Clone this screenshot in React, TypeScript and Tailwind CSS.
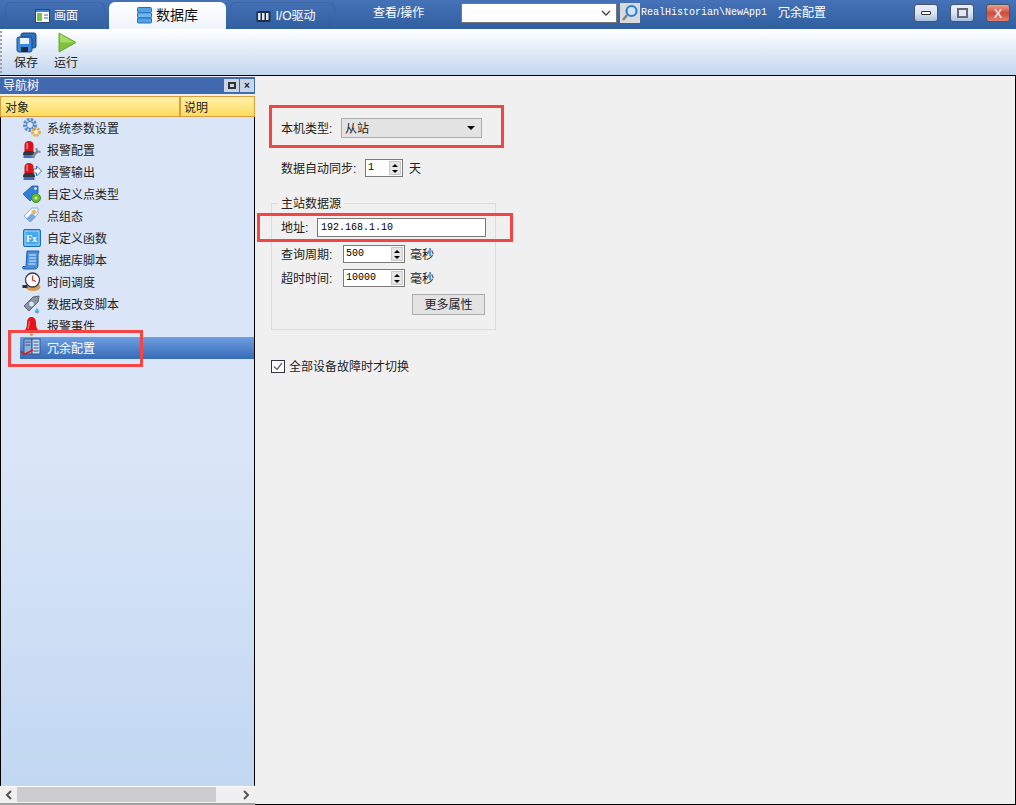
import type { ReactNode } from 'react'

const cjk = "font-['Liberation_Sans','Noto_Sans_CJK_SC',sans-serif]"
const mono = "font-['Liberation_Mono',monospace]"

function Svg({ size = 20, children }: { size?: number; children: ReactNode }) {
  return (
    <svg width={size} height={size} viewBox="0 0 20 20" className="shrink-0 overflow-visible">
      {children}
    </svg>
  )
}

/* tree icons */
const GearsIcon = () => (
  <Svg>
    <circle cx="8" cy="7" r="5.5" fill="none" stroke="#5b8fd0" strokeWidth="3" strokeDasharray="2.5 1.2" />
    <circle cx="8" cy="7" r="3.5" fill="none" stroke="#3f71b5" strokeWidth="1" />
    <circle cx="14" cy="14" r="3.6" fill="none" stroke="#e8a92c" strokeWidth="2.6" strokeDasharray="2 1" />
    <circle cx="14" cy="14" r="1.4" fill="#fff3c4" />
  </Svg>
)
const Siren = () => (
  <>
    <path d="M2.500 11V5C2.500 2.500 4.500 1 7 1s4.500 1.500 4.500 4V11Z" fill="#d8141c" />
    <rect x="4.500" y="3" width="1.500" height="6" fill="#f58a8a" />
    <path d="M1 15c0-2.500 1-4 2.500-4h7c1.500 0 2.500 1.500 2.500 4Z" fill="#33353f" />
    <rect x="1.500" y="15" width="11" height="3" fill="#3f6fc0" />
  </>
)
const AlarmConfigIcon = () => (
  <Svg>
    <Siren />
    <path d="M10 17l6-6" fill="none" stroke="#7f8898" strokeWidth="2.500" />
    <path d="M14.500 8a3 3 0 0 0 4 3.500" fill="none" stroke="#7f8898" strokeWidth="2" />
  </Svg>
)
const AlarmOutIcon = () => (
  <Svg>
    <Siren />
    <path d="M11.500 7h3V4l5 5-5 5v-3h-3Z" fill="#fff" stroke="#3c6fbb" strokeWidth="1" />
  </Svg>
)
const CustomTypeIcon = () => (
  <Svg>
    <path d="M1 10L10 2h6v7l-8 8Z" fill="#2f7fd6" stroke="#1e5aa8" strokeWidth="0.8" />
    <circle cx="13.500" cy="4.500" r="1.300" fill="#fff" />
    <circle cx="14" cy="14" r="4.500" fill="#6cb83a" stroke="#3f8a1e" strokeWidth="1" />
    <circle cx="14" cy="14" r="1.600" fill="#c9ec9f" />
  </Svg>
)
const PointGroupIcon = () => (
  <Svg>
    <path d="M2 10l8-8h6v6l-8 8Z" fill="#f4f7fc" stroke="#8eb0dc" strokeWidth="1" />
    <path d="M4 13l6-6 4 4-5 5Z" fill="#7aa7e0" />
    <path d="M9 6l3-3 3 3-3 3Z" fill="#e6b974" />
  </Svg>
)
const FxIcon = () => (
  <svg width="18" height="18" viewBox="0 0 18 18" className="shrink-0">
    <rect x="0.500" y="0.500" width="17" height="17" rx="1.500" fill="#3b9be8" stroke="#1a6fc0" />
    <rect x="2" y="2" width="14" height="14" fill="#48a8ee" stroke="#bfe2fb" strokeWidth="0.800" />
    <text x="3" y="13" fontSize="10" fontWeight="700" fill="#fff" fontFamily="Liberation Serif, serif">Fx</text>
  </svg>
)
const ScriptIcon = () => (
  <Svg>
    <path d="M5 1h12l-1 3v11c0 2-1 4-3 4H2c-1 0-2-1-1-2.500h3Z" fill="#4a90dc" stroke="#1f5fa8" strokeWidth="1" />
    <path d="M7 5h7M7 8h7M7 11h7M6.500 14h7" stroke="#e3f0fc" strokeWidth="1.200" />
  </Svg>
)
const ClockIcon = () => (
  <Svg>
    <ellipse cx="11" cy="15" rx="7.500" ry="4" fill="#d99a55" />
    <circle cx="10.500" cy="8" r="7" fill="#fff" stroke="#3d3d46" strokeWidth="1.300" />
    <path d="M10.500 3.500V8l3.500 1.500" fill="none" stroke="#c0392b" strokeWidth="1.200" />
    <rect x="0.500" y="13" width="5" height="3" fill="#24304a" />
  </Svg>
)
const TagScriptIcon = () => (
  <Svg>
    <path d="M2 12l9-9 6-1-1 6-9 9Z" fill="#8d95a3" stroke="#5a616d" strokeWidth="1" />
    <circle cx="9.500" cy="10" r="3" fill="#dfe5ee" stroke="#5f7796" strokeWidth="0.800" />
    <path d="M15 14c1.500 2 2 2.500 2 3.500a2 2 0 0 1-4 0c0-1 .5-1.500 2-3.500Z" fill="#5aa7ea" />
  </Svg>
)
const BellIcon = () => (
  <Svg>
    <path d="M9.500 1c3 0 4.500 2.500 4.500 6 0 4 1 6 3 8H2c2-2 3-4 3-8 0-3.500 1.500-6 4.500-6Z" fill="#e4141a" />
    <path d="M7.500 5c-.5 2-.5 5-1.500 8" stroke="#f78c8c" strokeWidth="1" fill="none" />
    <rect x="2" y="15" width="15" height="2" fill="#8c2a1f" />
    <circle cx="9.500" cy="18.500" r="1.500" fill="#c9a03c" />
  </Svg>
)
const RedundancyIcon = () => (
  <Svg>
    <rect x="2" y="1" width="8" height="15" fill="#8fb0dd" stroke="#33568c" strokeWidth="1" />
    <rect x="10" y="1" width="8" height="15" fill="#c7dbf3" stroke="#33568c" strokeWidth="1" />
    <path d="M3.500 4h5M3.500 7h5M11.500 4h5M11.500 7h5M11.500 10h5M11.500 13h5" stroke="#33568c" strokeWidth="1" />
    <path d="M-1 13l3 3.500L11 12" fill="none" stroke="#e01818" strokeWidth="1.800" />
  </Svg>
)

const treeItems = [
  { label: '系统参数设置', icon: <GearsIcon /> },
  { label: '报警配置', icon: <AlarmConfigIcon /> },
  { label: '报警输出', icon: <AlarmOutIcon /> },
  { label: '自定义点类型', icon: <CustomTypeIcon /> },
  { label: '点组态', icon: <PointGroupIcon /> },
  { label: '自定义函数', icon: <FxIcon /> },
  { label: '数据库脚本', icon: <ScriptIcon /> },
  { label: '时间调度', icon: <ClockIcon /> },
  { label: '数据改变脚本', icon: <TagScriptIcon /> },
  { label: '报警事件', icon: <BellIcon /> },
  { label: '冗余配置', icon: <RedundancyIcon />, selected: true },
]

function Tab({ label, icon, width, active }: { label: string; icon?: ReactNode; width: string; active?: boolean }) {
  return (
    <div
      className={`flex h-[27px] items-center justify-center gap-[4px] rounded-t-md ${width} ${
        active
          ? 'bg-linear-to-b from-white to-[#eef4fc] text-[14px] text-[#111]'
          : 'border-x border-t border-[#3a66a6] text-xs text-white'
      }`}
    >
      {icon}
      <span>{label}</span>
    </div>
  )
}

function WinButton({ close, children }: { close?: boolean; children: ReactNode }) {
  return (
    <div
      className={`flex h-[18px] w-6 items-center justify-center rounded-[3px] border border-[#4a5668] ${
        close
          ? 'bg-linear-to-b from-[#eea08e] via-[#d04a3a] to-[#e08070]'
          : 'bg-linear-to-b from-[#e6eef8] via-[#dbe6f4] to-[#a8c0de]'
      }`}
    >
      {children}
    </div>
  )
}

function Spin({ value, width }: { value: string; width: string }) {
  return (
    <div className={`flex h-[18px] items-center border border-[#7a7a7a] bg-white pl-[2px] pr-px ${width}`}>
      <span className={`flex-1 text-[10px] text-black ${mono}`}>{value}</span>
      <div className="flex h-[14px] w-[12px] flex-col items-center justify-around border border-[#c8c8c8] bg-[#e6e6e6]">
        <span className="h-0 w-0 border-x-[3px] border-b-[3px] border-x-transparent border-b-black" />
        <span className="h-0 w-0 border-x-[3px] border-t-[3px] border-x-transparent border-t-black" />
      </div>
    </div>
  )
}

export default function App() {
  return (
    <div className={`relative flex h-[805px] w-[1016px] flex-col overflow-hidden bg-white text-xs text-[#222] ${cjk}`}>
      {/* Title bar with tabs */}
      <div className="flex h-[29px] items-end bg-linear-to-b from-[#4672b8] to-[#2f5f9f] pl-[5px]">
        <div className="flex items-end gap-[3px]">
          <Tab
            label="画面"
            width="w-[100px] pl-[3px]"
            icon={
              <svg width="15" height="14" viewBox="0 0 15 14">
                <rect x="0.500" y="0.500" width="14" height="13" fill="#fff" stroke="#24476f" />
                <rect x="1" y="1" width="13" height="2" fill="#3f87d8" />
                <rect x="2" y="4" width="5" height="8" fill="#7cc04a" />
                <path d="M9 6h4M9 9h4" stroke="#4a6a90" />
              </svg>
            }
          />
          <Tab
            label="数据库"
            width="w-[117px] ml-[1px]"
            active
            icon={
              <svg width="15" height="17" viewBox="0 0 15 17">
                <rect x="0.500" y="0.500" width="14" height="5" rx="1" fill="#4fa3e8" stroke="#2a6fb8" />
                <rect x="0.500" y="5.800" width="14" height="5" rx="1" fill="#6fb7ee" stroke="#2a6fb8" />
                <rect x="0.500" y="11" width="14" height="5" rx="1" fill="#4fa3e8" stroke="#2a6fb8" />
              </svg>
            }
          />
          <Tab
            label="I/O驱动"
            width="w-[105px] ml-px pl-[7px]"
            icon={
              <svg width="15" height="13" viewBox="0 0 15 13">
                <rect x="0.500" y="1" width="14" height="11" rx="1.500" fill="#1e2d45" />
                <rect x="2" y="3" width="2.500" height="7" fill="#dfe7f0" />
                <rect x="6" y="3" width="2.500" height="7" fill="#dfe7f0" />
                <rect x="10" y="3" width="2.500" height="7" fill="#dfe7f0" />
              </svg>
            }
          />
        </div>
        <div className="mb-[6px] flex flex-1 items-center">
          <span className="ml-[38px] w-[88px] text-white">查看/操作</span>
          <div className="flex h-5 w-[156px] items-center justify-end border border-[#777] bg-white pr-[5px]">
            <svg width="10" height="6" viewBox="0 0 10 6">
              <path d="M1 1l4 4 4-4" fill="none" stroke="#444" strokeWidth="1.300" />
            </svg>
          </div>
          <div className="ml-[3px] flex h-5 w-5 items-center justify-center bg-[#d9d9d9]">
            <svg width="18" height="18" viewBox="0 0 18 18">
              <path d="M6 11l-4 5" stroke="#7c8a7c" strokeWidth="2.500" />
              <circle cx="10.500" cy="7" r="5" fill="#cfe6fa" stroke="#2f7fd0" strokeWidth="2.200" />
            </svg>
          </div>
          <span className={`ml-px w-[137px] text-[10px] text-white ${mono}`}>RealHistorian\NewApp1</span>
          <span className="text-white">冗余配置</span>
          <div className="ml-[88px] flex gap-3">
            <WinButton>
              <span className="h-[4px] w-[10px] rounded-[1px] border border-[#333] bg-white" />
            </WinButton>
            <WinButton>
              <span className="h-[10px] w-[11px] border-2 border-[#667] bg-[#dfe8f4]" />
            </WinButton>
            <WinButton close>
              <span className="text-[13px] font-bold leading-none text-[#ddd]">X</span>
            </WinButton>
          </div>
        </div>
      </div>

      {/* Toolbar */}
      <div className="flex h-[47px] border-b border-black bg-linear-to-b from-white to-[#c3d6ef]">
        <div className="my-[2px] w-[3px] border-l-2 border-dotted border-[#a0a0a0]" />
        <div className="ml-[8px] flex w-[30px] flex-col items-center pt-[3px]">
          <svg width="21" height="21" viewBox="0 0 21 21">
            <rect x="5" y="1" width="15" height="15" rx="2" fill="#2d6fc0" stroke="#1b4a8a" />
            <rect x="1" y="5" width="15" height="15" rx="2" fill="#3a88dc" stroke="#1b4a8a" />
            <rect x="4" y="6" width="9" height="6" fill="#e8f2fb" />
            <rect x="5" y="15" width="7" height="5" fill="#1c2c44" />
          </svg>
          <span className="mt-[2px] leading-[16px]">保存</span>
        </div>
        <div className="ml-[11px] flex w-[28px] flex-col items-center pt-[3px]">
          <svg width="20" height="21" viewBox="0 0 20 21" className="ml-[2px]">
            <path d="M2 1l17 9.500L2 20Z" fill="#7dc13c" stroke="#6bab30" />
            <path d="M3 2l14 8.500H3Z" fill="#a7dc62" />
          </svg>
          <span className="mt-[2px] leading-[16px]">运行</span>
        </div>
      </div>

      {/* Body */}
      <div className="flex min-h-0 flex-1">
        {/* Navigation tree */}
        <div className="flex w-[255px] flex-col bg-[#f0f0f0] pt-px">
          <div className="flex h-[17px] items-center justify-between bg-[#4169b0] pl-[3px] pr-[1px] text-white">
            <span className="pt-px">导航树</span>
            <div className="flex gap-px">
              <span className="flex h-[13px] w-[15px] items-center justify-center bg-[#c8d4e8]">
                <span className="h-[7px] w-[8px] border-2 border-[#333]" />
              </span>
              <span className="flex h-[13px] w-[14px] items-center justify-center bg-[#c8d4e8] text-[10px] font-bold leading-none text-[#222]">
                ×
              </span>
            </div>
          </div>
          <div className="mt-[2px] flex h-[21px] border border-[#db9d3c] bg-linear-to-b from-[#fff0a8] to-[#fddc5a]">
            <span className="flex w-[180px] items-center border-r-2 border-[#db9d3c] pl-[4px] pt-[2px]">对象</span>
            <span className="flex flex-1 items-center pl-[3px] pt-[2px]">说明</span>
          </div>
          <div className="flex min-h-0 flex-1 flex-col border-x border-black bg-linear-to-b from-[#dae6f7] from-50% to-[#c2d7f2]">
            {treeItems.map((item) => (
              <div
                key={item.label}
                className={`ml-[19px] flex h-[22px] shrink-0 items-center gap-[5px] pl-[2px] ${
                  item.selected ? 'bg-linear-to-b from-[#6d9ee0] to-[#376bb6] text-white' : 'text-[#222]'
                }`}
              >
                <span className="flex w-[20px] justify-center">{item.icon}</span>
                <span className="pt-[2px]">{item.label}</span>
              </div>
            ))}
          </div>
          {/* Scrollbar */}
          <div className="flex h-[17px] items-center border-t border-white bg-[#f0f0f0] pb-px">
            <span className="flex w-[17px] justify-center">
              <svg width="8" height="10" viewBox="0 0 8 10">
                <path d="M6 1L2 5l4 4" fill="none" stroke="#555" strokeWidth="2" />
              </svg>
            </span>
            <span className="h-[15px] w-[199px] bg-[#cdcdcd]" />
            <span className="flex flex-1 justify-end pr-[5px]">
              <svg width="8" height="10" viewBox="0 0 8 10">
                <path d="M2 1l4 4-4 4" fill="none" stroke="#555" strokeWidth="2" />
              </svg>
            </span>
          </div>
          <div className="h-[2px] bg-[#a0a0a0]" />
        </div>

        {/* Redundancy form */}
        <div className="flex-1 border-b border-r border-black bg-[#f0f0f0]">
          <div className="mt-[42px] flex h-[20px] items-center pl-[26px]">
            <span className="w-[60px] pt-px">本机类型:</span>
            <div className="flex h-[20px] w-[141px] items-center justify-between border border-[#adadad] bg-[#e3e3e3] pl-[3px] pr-[6px]">
              <span className="pt-px">从站</span>
              <span className="h-0 w-0 border-x-[4px] border-t-[4px] border-x-transparent border-t-black" />
            </div>
          </div>
          <div className="mt-[21px] flex h-[18px] items-center pl-[26px]">
            <span className="w-[84px] pt-px">数据自动同步:</span>
            <Spin value="1" width="w-[38px]" />
            <span className="ml-[6px] pt-px">天</span>
          </div>
          <div className="relative ml-[16px] mt-[26px] h-[127px] w-[225px] border border-[#dcdcdc] pl-[9px] pt-[14px]">
            <span className="absolute -top-[8px] left-[6px] bg-[#f0f0f0] px-[3px] leading-[16px]">主站数据源</span>
            <div className="flex h-[19px] items-center">
              <span className="w-[36px] pt-px">地址:</span>
              <div className={`flex h-[19px] w-[169px] items-center border border-[#7a7a7a] bg-white pl-[3px] text-[10px] text-black ${mono}`}>
                192.168.1.10
              </div>
            </div>
            <div className="mt-[8px] flex h-[18px] items-center">
              <span className="w-[62px] pt-px">查询周期:</span>
              <Spin value="500" width="w-[62px]" />
              <span className="ml-[5px] pt-px">毫秒</span>
            </div>
            <div className="mt-[6px] flex h-[18px] items-center">
              <span className="w-[62px] pt-px">超时时间:</span>
              <Spin value="10000" width="w-[62px]" />
              <span className="ml-[5px] pt-px">毫秒</span>
            </div>
            <div className="mt-[7px] flex justify-end pr-[10px]">
              <div className="flex h-[21px] w-[73px] items-center justify-center border border-[#adadad] bg-[#e3e3e3] pt-px">
                更多属性
              </div>
            </div>
          </div>
          <div className="ml-[16px] mt-[28px] flex items-center gap-[4px]">
            <span className="flex h-[13px] w-[14px] items-center justify-center border border-[#333344] bg-white">
              <svg width="10" height="9" viewBox="0 0 10 9">
                <path d="M1 4.500l3 3 5-6.500" fill="none" stroke="#666" strokeWidth="1.400" />
              </svg>
            </span>
            <span className="pt-px">全部设备故障时才切换</span>
          </div>
        </div>
      </div>

      {/* Red annotation boxes drawn over the screenshot */}
      <div className="absolute left-[269px] top-[105px] h-[43px] w-[235px] border-[3px] border-[#f44444]" />
      <div className="absolute left-[257px] top-[213px] h-[29px] w-[256px] border-[3px] border-[#f44444]" />
      <div className="absolute left-[8px] top-[330px] h-[37px] w-[135px] border-[3px] border-[#f44444]" />
    </div>
  )
}
